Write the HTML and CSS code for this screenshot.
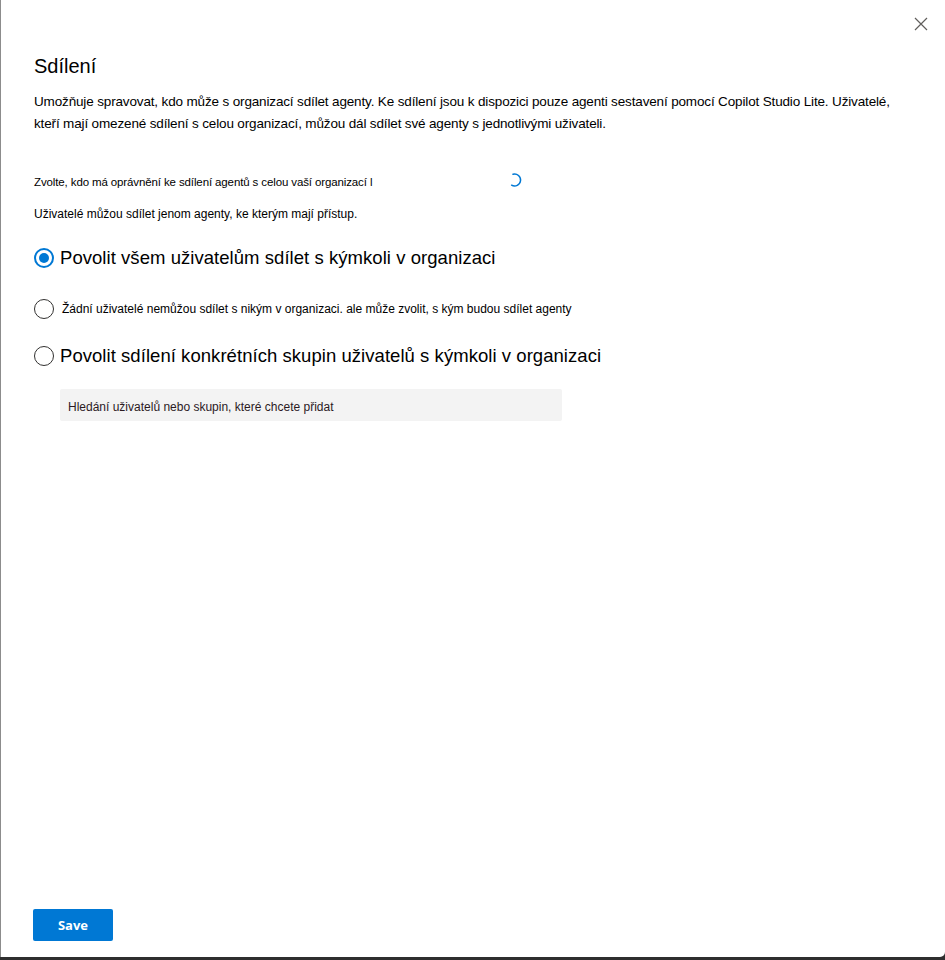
FILE: index.html
```html
<!DOCTYPE html>
<html lang="cs">
<head>
<meta charset="utf-8">
<title>Sdílení</title>
<link rel="stylesheet" href="styles.css">
</head>
<body>
<div class="panel">
  <button class="close" aria-label="Zavřít">
    <svg width="14" height="14" viewBox="0 0 14 14"><path d="M1 1 L13 13 M13 1 L1 13" stroke="#605e5c" stroke-width="1.2" fill="none"/></svg>
  </button>
  <div class="content">
    <h1 class="title">Sdílení</h1>
    <p class="desc">Umožňuje spravovat, kdo může s organizací sdílet agenty. Ke sdílení jsou k dispozici pouze agenti sestavení pomocí Copilot Studio Lite. Uživatelé, kteří mají omezené sdílení s celou organizací, můžou dál sdílet své agenty s jednotlivými uživateli.</p>
    <div class="choose">
      <span>Zvolte, kdo má oprávnění ke sdílení agentů s celou vaší organizací l</span>
      <svg class="spinner" width="14" height="16" viewBox="0 0 14 16"><path d="M5 2.2 A6 6 0 1 1 3.6 13.2" stroke="#0078d4" stroke-width="1.5" fill="none" stroke-linecap="round"/></svg>
    </div>
    <p class="note">Uživatelé můžou sdílet jenom agenty, ke kterým mají přístup.</p>
    <div class="options">
      <label class="opt opt-big">
        <span class="radio checked"></span>
        <span>Povolit všem uživatelům sdílet s kýmkoli v organizaci</span>
      </label>
      <label class="opt opt-small">
        <span class="radio"></span>
        <span>Žádní uživatelé nemůžou sdílet s nikým v organizaci. ale může zvolit, s kým budou sdílet agenty</span>
      </label>
      <label class="opt opt-big">
        <span class="radio"></span>
        <span>Povolit sdílení konkrétních skupin uživatelů s kýmkoli v organizaci</span>
      </label>
      <div class="search">Hledání uživatelů nebo skupin, které chcete přidat</div>
    </div>
  </div>
  <div class="footer">
    <button class="save">Save</button>
  </div>
</div>
</body>
</html>
```
FILE: styles.css
```css
html, body {
  margin: 0;
  padding: 0;
  background: #2f2f2f;
}
body {
  font-family: "Liberation Sans", Arial, sans-serif;
  color: #000;
}
.panel {
  position: relative;
  box-sizing: border-box;
  width: 945px;
  height: 957px;
  background: #fff;
  border-left: 1px solid #8c8c8c;
  border-bottom-right-radius: 5px;
  display: flex;
  flex-direction: column;
}
.close {
  position: absolute;
  top: 17px;
  right: 17px;
  width: 14px;
  height: 14px;
  padding: 0;
  border: 0;
  background: none;
  display: flex;
}
.content {
  flex: 1;
  padding: 0 32px 0 33px;
}
.title {
  margin: 53px 0 0;
  font-size: 20px;
  font-weight: 400;
  line-height: 26px;
}
.desc {
  margin: 12px 0 0;
  max-width: 868px;
  font-size: 13.5px;
  letter-spacing: -0.15px;
  line-height: 22px;
}
.choose {
  margin-top: 39px;
  display: flex;
  align-items: center;
  font-size: 11.5px;
  letter-spacing: -0.12px;
  line-height: 16px;
}
.spinner {
  margin-left: 136px;
  margin-top: -4px;
}
.note {
  margin: 16px 0 0;
  font-size: 12px;
  line-height: 16px;
}
.options {
  margin-top: 22px;
  display: flex;
  flex-direction: column;
}
.opt {
  display: flex;
  align-items: center;
  gap: 6px;
}
.opt-big {
  font-size: 18.5px;
  letter-spacing: 0.05px;
  line-height: 28px;
}
.opt-small {
  font-size: 12px;
  line-height: 20px;
  gap: 8px;
  margin: 27px 0 23px;
}
.radio {
  box-sizing: border-box;
  width: 20px;
  height: 20px;
  border-radius: 50%;
  border: 1px solid #323130;
  flex: none;
  display: flex;
  align-items: center;
  justify-content: center;
}
.radio.checked {
  border: 2px solid #0078d4;
}
.radio.checked::after {
  content: "";
  width: 10px;
  height: 10px;
  border-radius: 50%;
  background: #0078d4;
}
.search {
  margin: 19px 0 0 26px;
  width: 502px;
  height: 32px;
  box-sizing: border-box;
  padding: 0 8px;
  background: #f3f3f3;
  border-radius: 2px;
  font-size: 12px;
  line-height: 36px;
  color: #2b1a1f;
}
.footer {
  padding: 0 0 16px 32px;
}
.save {
  width: 80px;
  height: 32px;
  border: 0;
  border-radius: 2px;
  background: #0078d4;
  color: #fff;
  font-family: "Open Sans", sans-serif;
  font-weight: 700;
  font-size: 13px;
  padding: 0;
}
```
